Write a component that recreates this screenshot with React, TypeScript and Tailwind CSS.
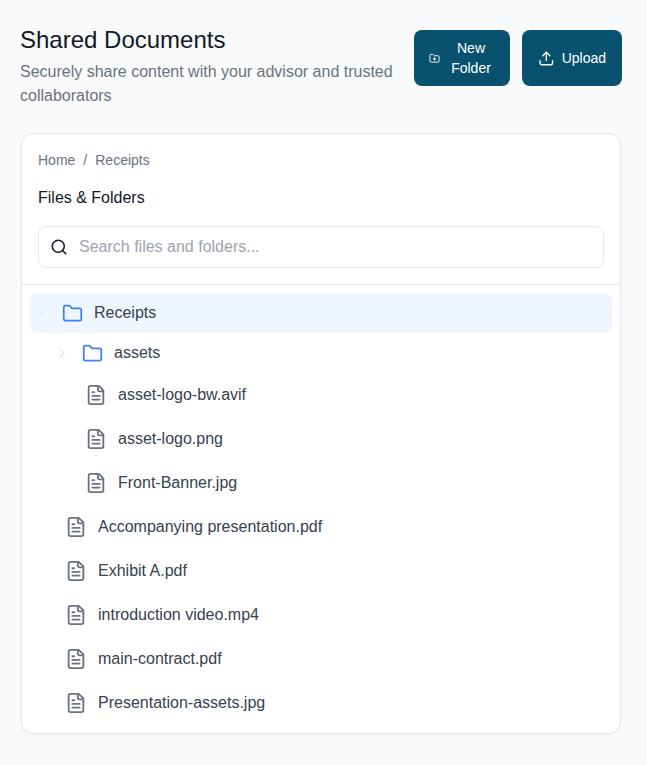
import { ChevronDown, ChevronRight, Folder, FolderPlus, Search, Upload } from "lucide-react";

function FileIcon() {
  return (
    <svg width="22" height="22" viewBox="0 0 24 24" fill="none" stroke="#6b7280" strokeWidth="2" strokeLinecap="round" strokeLinejoin="round" className="shrink-0">
      <path d="M15 2H6a2 2 0 0 0-2 2v16a2 2 0 0 0 2 2h12a2 2 0 0 0 2-2V7Z" />
      <path d="M14 2v4a2 2 0 0 0 2 2h4" />
      <path d="M16 13H8" />
      <path d="M16 17H8" />
      <path d="M10 9H8" />
    </svg>
  );
}

function FileRow({ name, nested }: { name: string; nested?: boolean }) {
  return (
    <div className={`flex h-11 items-center gap-[11px] ${nested ? "pl-[55px]" : "pl-[35px]"}`}>
      <FileIcon />
      <span className="text-[16px] text-[#374151]">{name}</span>
    </div>
  );
}

const nestedFiles = ["asset-logo-bw.avif", "asset-logo.png", "Front-Banner.jpg"];
const rootFiles = ["Accompanying presentation.pdf", "Exhibit A.pdf", "introduction video.mp4", "main-contract.pdf", "Presentation-assets.jpg"];

export default function App() {
  return (
    <div className="min-h-[765px] bg-[#f9fafb] pl-5 pr-[25px] pt-[30px] font-['Liberation_Sans',Arial,sans-serif]">
      <header className="flex items-start justify-between gap-4">
        <div className="w-[380px]">
          <h1 className="text-[24px] leading-[20px] font-normal text-[#111827]">Shared Documents</h1>
          <p className="mt-[10px] text-[16px] leading-6 text-[#6b7280]">Securely share content with your advisor and trusted collaborators</p>
        </div>
        <div className="flex gap-3">
          <button className="flex h-14 w-24 items-center gap-[7px] rounded-lg bg-[#08526f] px-[15px] text-[14px] leading-5 text-white">
            <FolderPlus size={11} className="shrink-0" />
            <span className="flex-1 text-center">New<br />Folder</span>
          </button>
          <button className="flex h-14 w-[100px] items-center justify-center gap-[7px] rounded-lg bg-[#08526f] px-4 text-[14px] text-white">
            <Upload size={17} />
            Upload
          </button>
        </div>
      </header>

      <section className="mt-[25px] ml-px w-[600px] rounded-xl border border-[#e5e7eb] bg-white shadow-xs">
        <div className="border-b border-[#e5e7eb] px-4 pb-4 pt-[18px]">
          <nav className="flex items-center gap-2 text-[14px] leading-4 text-[#6b7280]">
            <span>Home</span><span>/</span><span>Receipts</span>
          </nav>
          <h2 className="mt-[22px] text-[16px] font-normal leading-4 text-[#111827]">Files &amp; Folders</h2>
          <div className="mt-[20px] flex h-[42px] items-center gap-[11px] rounded-lg border border-[#e5e7eb] pl-[11px]">
            <Search size={18} className="text-[#111827]" />
            <span className="text-[16px] text-[#9ca3af]">Search files and folders...</span>
          </div>
        </div>
        <div className="px-2 pb-2 pt-2">
          <div className="flex h-10 items-center rounded-lg bg-[#eff6ff] pl-1">
            <ChevronDown size={16} className="text-[#e5e7eb]" />
            <Folder size={21} className="ml-[11.5px] text-[#3b82f6]" />
            <span className="ml-[11.5px] text-[16px] text-[#374151]">Receipts</span>
          </div>
          <div className="flex h-10 items-center pl-6">
            <ChevronRight size={16} className="text-[#e5e7eb]" />
            <Folder size={21} className="ml-[11.5px] text-[#3b82f6]" />
            <span className="ml-[11.5px] text-[16px] text-[#374151]">assets</span>
          </div>
          {nestedFiles.map((f) => <FileRow key={f} name={f} nested />)}
          {rootFiles.map((f) => <FileRow key={f} name={f} />)}
        </div>
      </section>
    </div>
  );
}
